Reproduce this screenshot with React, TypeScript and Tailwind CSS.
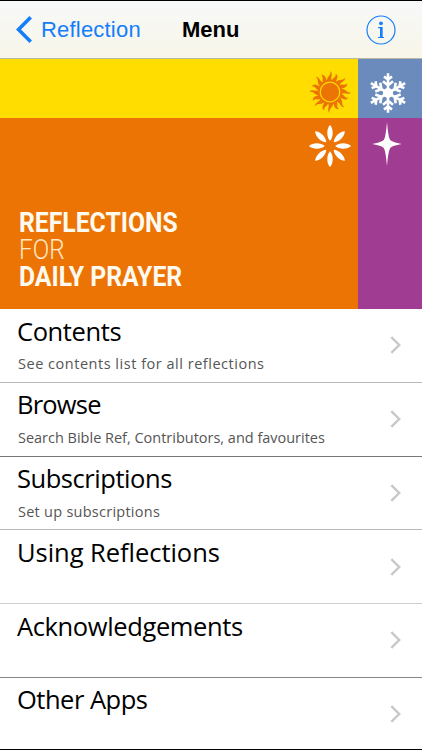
import React from 'react'

const items = [
    { id: 1, title: 'Contents', sub: 'See contents list for all reflections', line: 'border-[#b8b8b8]', tracking: 'tracking-[-0.4px]', subTracking: 'tracking-[0.52px]' },
    { id: 2, title: 'Browse', sub: 'Search Bible Ref, Contributors, and favourites', line: 'border-[#777777]', tracking: 'tracking-[-0.8px]', subTracking: 'tracking-[-0.01px]' },
    { id: 3, title: 'Subscriptions', sub: 'Set up subscriptions', line: 'border-[#b8b8b8]', tracking: 'tracking-[-0.45px]', subTracking: 'tracking-[0.26px]' },
    { id: 4, title: 'Using Reflections', sub: '', line: 'border-[#cfcfcf]', tracking: 'tracking-[-0.04px]', subTracking: '' },
    { id: 5, title: 'Acknowledgements', sub: '', line: 'border-[#888888]', tracking: 'tracking-[-0.38px]', subTracking: '' },
    { id: 6, title: 'Other Apps', sub: '', line: 'border-transparent', tracking: 'tracking-[-0.5px]', subTracking: '' },
]

const rays = Array.from({ length: 8 }, (_, i) => i * 45)
const arms = [0, 60, 120, 180, 240, 300]

const Sun = () => (
    <svg viewBox="-21 -21 42 42" className="w-[42px] h-[42px] shrink-0" fill="#ec7405">
        {rays.map((r) => (
            <g key={r} transform={`rotate(${r})`}>
                <path d="M-2.6-11C-4.2-15.5 1.6-16 .4-21C3.8-17.5-.2-15.2 2-11Z" />
                <path transform="rotate(22.5)" d="M-2.2-11C-4-14.4 .6-15-1.8-19.4C3.6-17.2 .2-14 2-11Z" />
            </g>
        ))}
        <circle r="12.2" />
        <circle r="9.8" stroke="#ffdd00" strokeWidth="1.2" />
    </svg>
)

const Snowflake = () => (
    <svg viewBox="-21 -21 42 42" className="w-[42px] h-[42px] shrink-0" fill="none" stroke="#fff" strokeWidth="2.6">
        {arms.map((r) => (
            <path key={r} transform={`rotate(${r})`} d="M0 0V-19.8M-4-16.6L0-13.4L4-16.6M-5-11.8L0-7.6L5-11.8" />
        ))}
        <circle r="5" fill="#fff" stroke="none" />
    </svg>
)

const Flower = () => (
    <svg viewBox="-21 -21 42 42" className="w-[42px] h-[42px] shrink-0" fill="#fff">
        {rays.map((r) => (
            <path key={r} transform={`rotate(${r})`} d="M0-21C3.6-17.2 3.6-9.2 0-5.2C-3.6-9.2-3.6-17.2 0-21Z" />
        ))}
    </svg>
)

const Star = () => (
    <svg viewBox="-21 -22 42 44" className="w-[42px] h-[44px] shrink-0" fill="#fff">
        <path d="M0-22C.9-12 1.8-5 3.8-3.4C6-1.7 10-.9 14.8 0C10 .9 6 1.7 3.8 3.4C1.8 5 .9 12 0 22C-.9 12-1.8 5-3.8 3.4C-6 1.7-10 .9-14.8 0C-10-.9-6-1.7-3.8-3.4C-1.8-5-.9-12 0-22Z" />
    </svg>
)

const Header = () => (
    <header className="grid grid-cols-[166px_auto_1fr] items-center h-[59px] shrink-0 pl-[16px] pr-[26px] border-t border-t-black border-b border-b-[#b9b7a8] bg-gradient-to-b from-[#f7f8f9] to-[#f8f6e8]">
        <button className="flex items-center gap-[9px] text-[#147efb]">
            <svg viewBox="0 0 16 27" className="w-[16px] h-[27px]" fill="none" stroke="currentColor" strokeWidth="3.6">
                <path d="M14.7 1.3L2.5 13.5L14.7 25.7" />
            </svg>
            <span className="text-[22px] leading-[26px] tracking-[0.2px]">Reflection</span>
        </button>
        <h1 className="text-[22px] leading-[26px] font-bold text-black">Menu</h1>
        <button className="justify-self-end text-[#147efb]">
            <svg viewBox="0 0 30 30" className="w-[30px] h-[30px]" fill="none" stroke="currentColor" strokeWidth="1.2">
                <circle cx="15" cy="15" r="14" />
                <circle cx="15" cy="8.3" r="1.9" fill="currentColor" stroke="none" />
                <path d="M12.1 12.6H15.5V22.5M12.1 22.5H18" />
                <path d="M15.3 12V22.5" strokeWidth="2.6" />
            </svg>
        </button>
    </header>
)

const Banner = () => (
    <section className="grid grid-cols-[358px_1fr] grid-rows-[58.5px_191.5px] h-[250px] shrink-0">
        <div className="flex justify-end pr-[7px] pt-[12px] bg-[#ffdd00]"><Sun /></div>
        <div className="flex pl-[8.5px] pt-[12.5px] bg-[#6b8bbd]"><Snowflake /></div>
        <div className="flex justify-between pl-[19px] pr-[7.5px] pt-[7px] bg-[#ec7405]">
            <h2 className="pt-[85px] font-['Roboto',sans-serif] text-[27px] leading-[27.2px] font-bold text-[#fffaf0] whitespace-nowrap">
                <span className="block origin-left scale-x-[0.916]">REFLECTIONS</span>
                <span className="block origin-left scale-x-[0.9] font-light text-[#ffe9c4]">FOR</span>
                <span className="block origin-left scale-x-[0.916]">DAILY PRAYER</span>
            </h2>
            <Flower />
        </div>
        <div className="flex pl-[8px] pt-[4px] bg-[#a03c92]"><Star /></div>
    </section>
)

const App = () => {
    return (
        <main className="flex flex-col w-[422px] h-[750px] overflow-hidden bg-white border-b border-black font-['Liberation_Sans',sans-serif]">
            <Header />
            <Banner />
            <ul className="font-['Open_Sans',sans-serif]">
                {items.map((item) => (
                    <li key={item.id} className={`flex items-center justify-between h-[73.75px] pl-[17px] pr-[21px] border-b ${item.line}`}>
                        <div className="self-start pt-[5.5px] whitespace-nowrap">
                            <div className={`text-[25.5px] leading-[32px] text-black ${item.tracking}`}>{item.title}</div>
                            {item.sub && (
                                <div className={`pl-px mt-[7.5px] text-[14.5px] leading-[20px] text-[#555] ${item.subTracking}`}>{item.sub}</div>
                            )}
                        </div>
                        <svg viewBox="0 0 11 18" className="w-[11px] h-[18px] shrink-0" fill="none" stroke="#c7c7cc" strokeWidth="2.4">
                            <path d="M1.3 1.2L9.2 9L1.3 16.8" />
                        </svg>
                    </li>
                ))}
            </ul>
        </main>
    )
}

export default App
